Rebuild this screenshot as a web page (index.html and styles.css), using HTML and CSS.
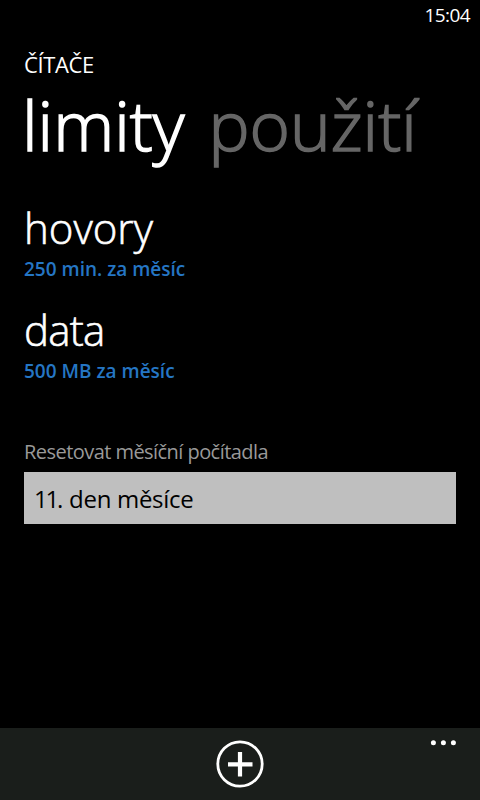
FILE: index.html
```html
<!DOCTYPE html>
<html lang="cs">
<head>
    <meta charset="UTF-8">
    <meta name="viewport" content="width=device-width, initial-scale=1.0">
    <title>Čítače</title>
    <link rel="stylesheet" href="styles.css">
</head>
<body>
    <div class="status-bar">15:04</div>

    <main class="content">
        <h1 class="app-title">ČÍTAČE</h1>
        <nav class="pivot">
            <span class="active">limity</span>
            <span class="next">použití</span>
        </nav>

        <ul class="limits">
            <li>
                <h2 class="limit-name">hovory</h2>
                <p class="limit-value">250 min. za měsíc</p>
            </li>
            <li>
                <h2 class="limit-name short">data</h2>
                <p class="limit-value">500 MB za měsíc</p>
            </li>
        </ul>

        <div class="field">
            <span class="field-label">Resetovat měsíční počítadla</span>
            <div class="field-box"><span class="day">11.</span> den měsíce</div>
        </div>
    </main>

    <footer class="app-bar">
        <svg class="add-icon" width="48" height="48" viewBox="0 0 48 48">
            <circle cx="24" cy="24" r="22.2" fill="none" stroke="#fff" stroke-width="2.8"/>
            <path d="M24 12v24.5M12 24.3h24.5" stroke="#fff" stroke-width="4.2"/>
        </svg>
        <svg class="more-icon" width="26" height="6" viewBox="0 0 26 6">
            <circle cx="3.4" cy="2.7" r="2.5" fill="#fff"/>
            <circle cx="13.4" cy="2.7" r="2.5" fill="#fff"/>
            <circle cx="23.4" cy="2.7" r="2.5" fill="#fff"/>
        </svg>
    </footer>
</body>
</html>
```

FILE: styles.css
```css
body {
    margin: 0;
    width: 480px;
    height: 800px;
    display: flex;
    flex-direction: column;
    overflow: hidden;
    background-color: #000;
    color: #fff;
    font-family: "Open Sans", "Noto Sans", sans-serif;
}
h1, h2, p, ul {
    margin: 0;
    padding: 0;
    font-weight: normal;
}
ul {
    list-style: none;
}
.status-bar {
    height: 32px;
    line-height: 31px;
    padding-right: 10px;
    text-align: right;
    font-size: 19px;
    letter-spacing: -0.6px;
}
.content {
    flex: 1;
    padding: 0 24px;
}
.app-title {
    margin-top: 18px;
    font-size: 22px;
    line-height: 29px;
    height: 30px;
    letter-spacing: -0.4px;
}
.pivot {
    display: flex;
    gap: 24px;
    height: 100px;
    line-height: 89px;
    font-size: 69px;
    font-weight: 300;
    white-space: nowrap;
    -webkit-text-stroke: 1.5px;
}
.active {
    margin-left: -2px;
}
.next {
    color: #666;
}
.limits {
    margin-top: 22px;
}
.limits li {
    height: 102px;
}
.limit-name {
    font-size: 42px;
    font-weight: 300;
    line-height: 52px;
    height: 54px;
    -webkit-text-stroke: 0.6px;
}
.short {
    letter-spacing: -0.8px;
}
.limit-value {
    font-size: 19px;
    font-weight: 600;
    line-height: 26px;
    color: #2576c4;
}
.field {
    margin-top: 32px;
}
.field-label {
    display: block;
    height: 34px;
    line-height: 28px;
    font-size: 20px;
    letter-spacing: -0.55px;
    color: #999;
}
.field-box {
    height: 52px;
    line-height: 54px;
    padding-left: 10px;
    background-color: #bfbfbf;
    color: #000;
    font-size: 24px;
    letter-spacing: -0.3px;
}
/* tighten the two ones */
.day {
    letter-spacing: -2.2px;
    margin-right: 2px;
}
.app-bar {
    height: 72px;
    background-color: #1a1e1b;
    display: flex;
    justify-content: space-between;
}
.add-icon {
    margin: 12px 0 0 216px;
}
.more-icon {
    margin: 12px 24px 0 0;
}
```
